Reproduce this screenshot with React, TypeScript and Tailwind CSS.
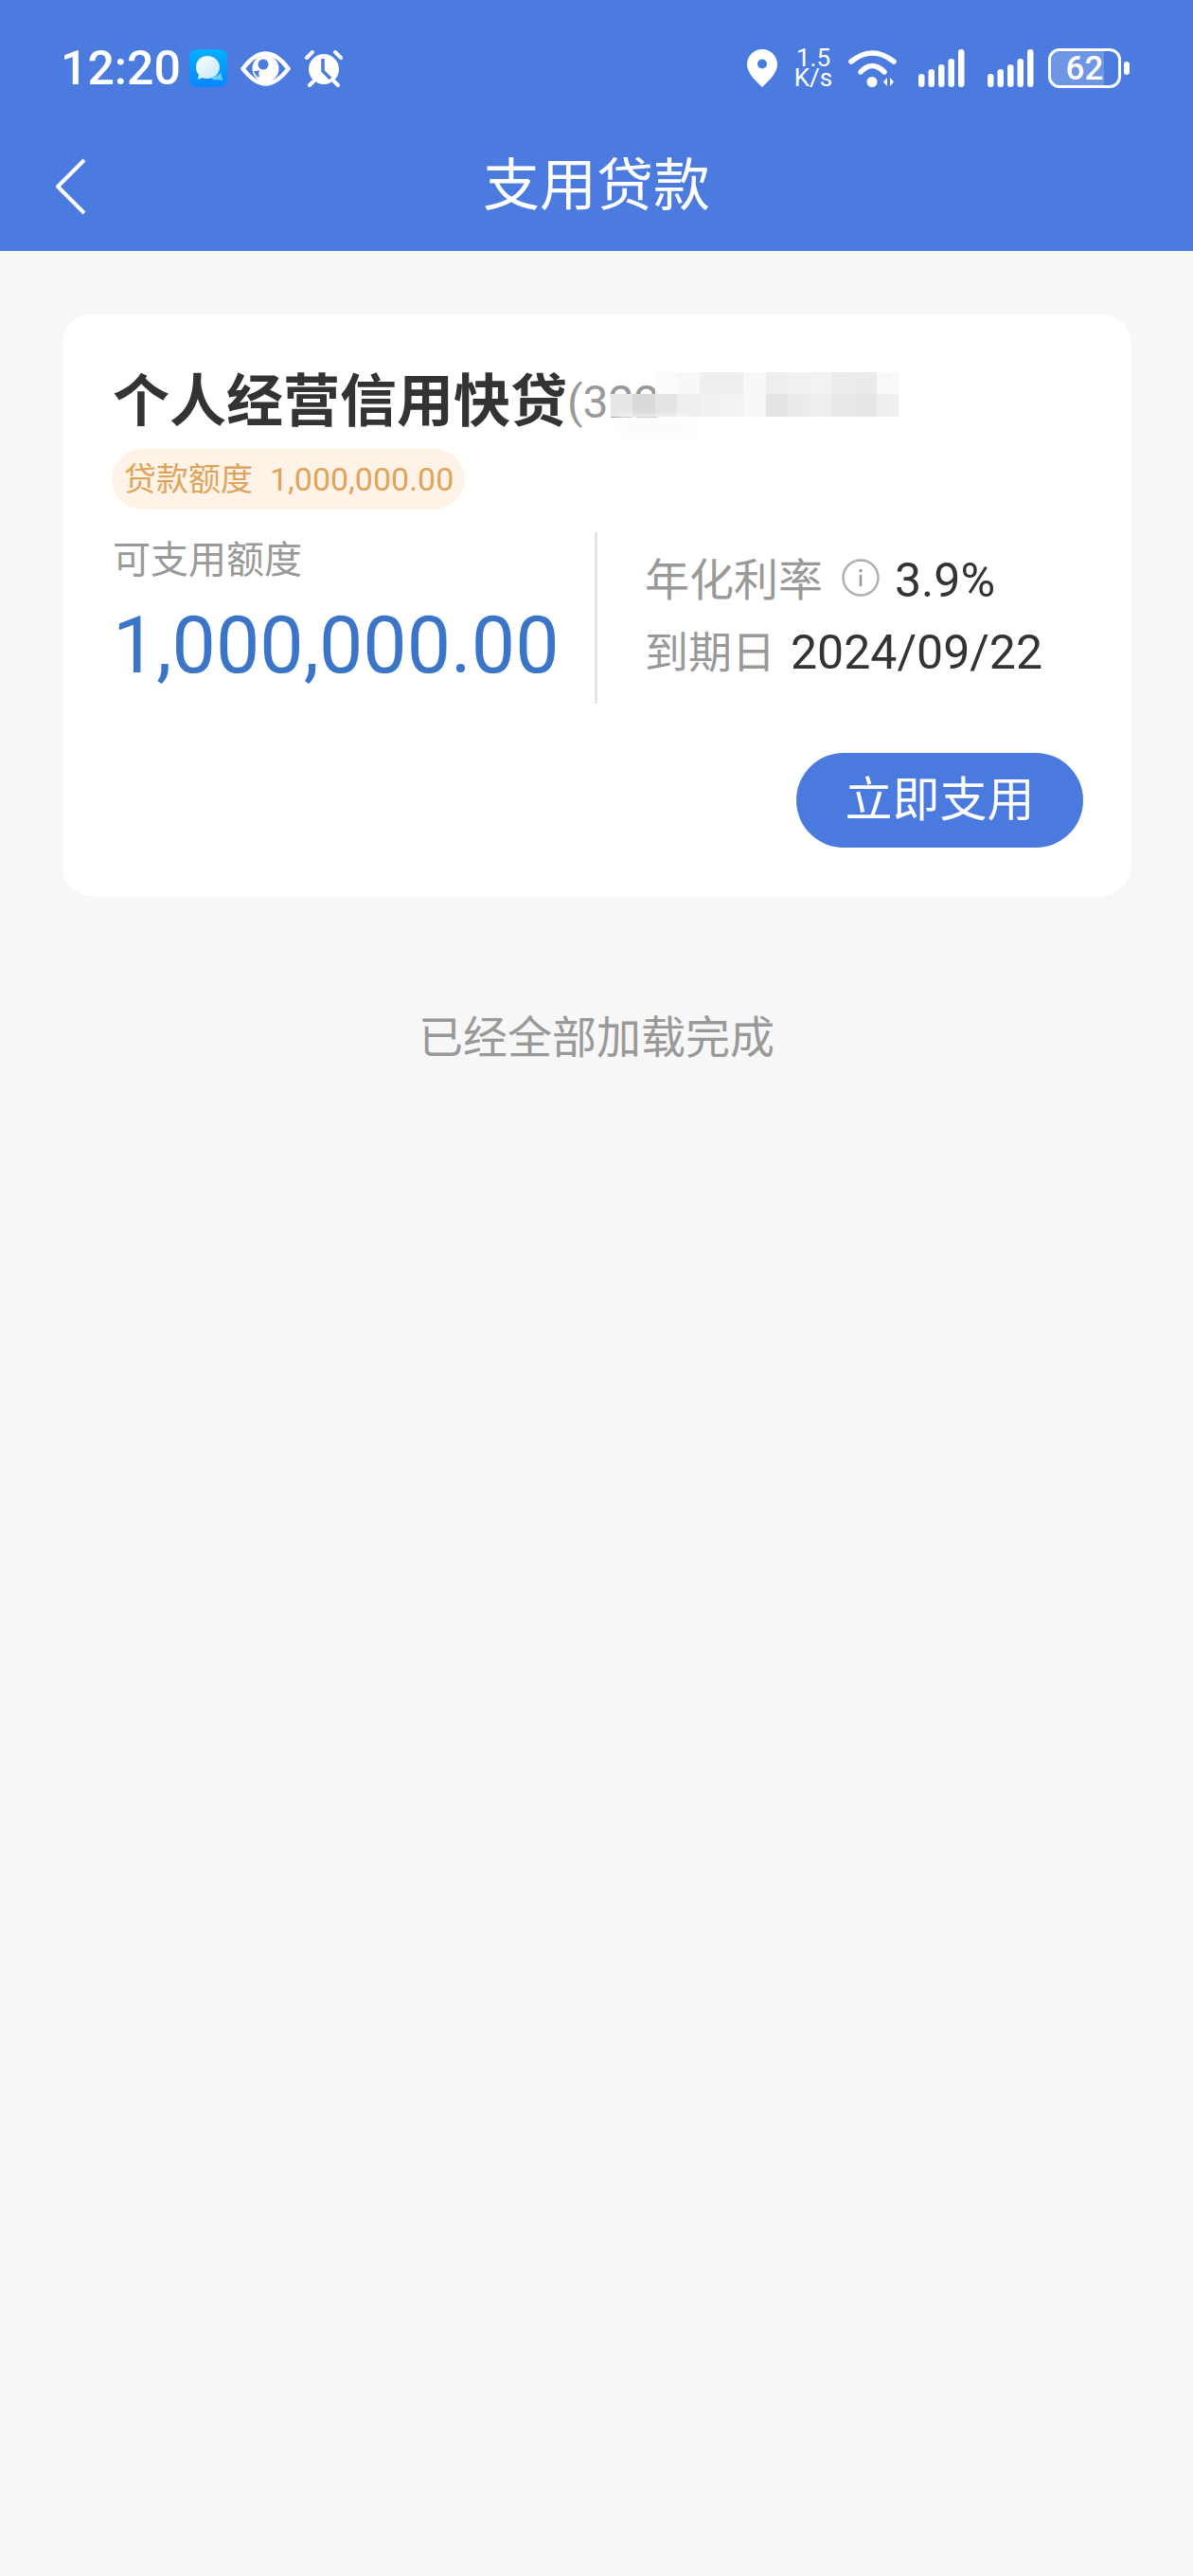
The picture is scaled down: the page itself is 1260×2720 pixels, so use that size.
import React from "react";

const mosaicTop = ["", "", "bg-[#fbfbfb]", "bg-[#f8f8f8]", "bg-[#efefef]", "bg-[#eeeeee]", "bg-[#f8f8f8]", "bg-[#eeeeee]", "bg-[#f0f0f0]", "bg-[#f2f2f2]", "bg-[#ececec]", "bg-[#ebebeb]", "bg-[#f9f9f9]"];
const mosaicBottom = ["bg-[#e6e6e6]", "bg-[#dadada]", "bg-[#e4e4e4]", "bg-[#eeeeee]", "bg-[#f1f1f1]", "bg-[#f2f2f2]", "bg-[#f7f7f7]", "bg-[#e3e3e3]", "bg-[#ebebeb]", "bg-[#eeeeee]", "bg-[#e8e8e8]", "bg-[#e7e7e7]", "bg-[#efefef]"];

function MessageIcon() {
  return (
    <svg width="40" height="40" viewBox="0 0 40 40">
      <defs>
        <linearGradient id="msgBg" x1="0" y1="0" x2="0" y2="1">
          <stop offset="0" stopColor="#00b2ff" />
          <stop offset="1" stopColor="#0a84ff" />
        </linearGradient>
        <linearGradient id="msgFront" x1="0" y1="0" x2="1" y2="1">
          <stop offset="0" stopColor="#ffffff" />
          <stop offset="1" stopColor="#bfe6fb" />
        </linearGradient>
      </defs>
      <rect width="40" height="40" rx="8" fill="url(#msgBg)" />
      <path d="M23 30c5-1 9-3 10-6l2 9-6-1c-2 1-5 0-6-2z" fill="#5fd0f5" />
      <path d="M19 7c7 0 13 5 13 12s-6 12-13 12c-2 0-3 0-5-1l-5 2 1-5c-2-2-3-5-3-8 0-7 5-12 12-12z" fill="url(#msgFront)" />
    </svg>
  );
}

function EyeIcon() {
  return (
    <svg width="53" height="37" viewBox="0 0 53 37">
      <path d="M2.5 18.5C12 6 20 2.5 26.5 2.5S41 6 50.5 18.5C41 31 33 34.5 26.5 34.5S12 31 2.5 18.5Z" fill="none" stroke="#fff" strokeWidth="4.5" />
      <circle cx="26.5" cy="18.5" r="14" fill="#fff" />
      <circle cx="24" cy="14" r="5.5" fill="#4c7bdf" />
      <path d="M14 21c1 3 3 6 6 7-1-3-1-6 0-8-2 1-4 1-6 1z" fill="#4c7bdf" />
    </svg>
  );
}

function AlarmIcon() {
  return (
    <svg width="42" height="40" viewBox="0 0 42 40">
      <circle cx="21" cy="21" r="16" fill="#fff" />
      <path d="M20 10v13l8 8" fill="none" stroke="#4c7bdf" strokeWidth="3.5" />
      <path d="M3 9l6-6M33 3l6 6" stroke="#fff" strokeWidth="4" strokeLinecap="round" />
      <path d="M6 38l4-4M32 34l4 4" stroke="#fff" strokeWidth="4" strokeLinecap="round" />
    </svg>
  );
}

function PinIcon() {
  return (
    <svg width="32" height="40" viewBox="0 0 32 40">
      <path fillRule="evenodd" fill="#fff" d="M16 0C7 0 0 7 0 16c0 10 11 19 16 24 5-5 16-14 16-24C32 7 25 0 16 0Zm0 10.5a5 5 0 1 1 0 10 5 5 0 0 1 0-10Z" />
    </svg>
  );
}

function WifiIcon() {
  return (
    <svg width="51" height="40" viewBox="0 0 51 40">
      <path d="M3 13Q25-5 48 13" fill="none" stroke="#fff" strokeWidth="5.5" strokeLinecap="round" />
      <path d="M13 24Q25 11 38 24" fill="none" stroke="#fff" strokeWidth="5.5" strokeLinecap="round" />
      <circle cx="25" cy="34.5" r="5.5" fill="#fff" />
      <path d="M41 30v9l-4-4.500zM44 30v9l4-4.500z" fill="#fff" />
    </svg>
  );
}

function SignalIcon() {
  return (
    <svg width="49" height="40" viewBox="0 0 49 40" fill="#fff">
      <rect x="0" y="26" width="6.500" height="14" rx="3.200" />
      <rect x="10.500" y="21" width="6.500" height="19" rx="3.200" />
      <rect x="21" y="16" width="6.500" height="24" rx="3.200" />
      <rect x="31.500" y="10" width="6.500" height="30" rx="3.200" />
      <rect x="42" y="0" width="6.500" height="40" rx="3.200" />
    </svg>
  );
}

function InfoIcon() {
  return (
    <svg width="40" height="40" viewBox="0 0 40 40">
      <circle cx="20" cy="20" r="18.500" fill="none" stroke="#b0b0b0" strokeWidth="2.500" />
      <circle cx="20" cy="12.500" r="1.800" fill="#999" />
      <rect x="18.700" y="17" width="2.600" height="12" fill="#999" />
    </svg>
  );
}

export default function App() {
  return (
    <div className="min-h-[2720px] bg-[#f7f7f7] font-['Roboto','Noto_Sans_CJK_SC',sans-serif]">
      <header className="h-[265px] bg-[#4c7bdf] text-white pt-[44px]">
        <div className="h-[56px] flex items-center justify-between pl-[64px] pr-[67px]">
          <div className="flex items-center">
            <span className="text-[50px] leading-[56px] w-[136px] font-medium">12:20</span>
            <MessageIcon />
            <span className="ml-[14px]"><EyeIcon /></span>
            <span className="ml-[14px]"><AlarmIcon /></span>
          </div>
          <div className="flex items-center">
            <PinIcon />
            <div className="ml-[18px] w-[40px] flex flex-col items-center text-[26px] leading-[21px]">
              <span>1.5</span>
              <span>K/s</span>
            </div>
            <span className="ml-[17px]"><WifiIcon /></span>
            <span className="ml-[23px]"><SignalIcon /></span>
            <span className="ml-[24px]"><SignalIcon /></span>
            <div className="ml-[15px] relative w-[77px] h-[42px] rounded-[12px] border-[3px] border-white overflow-hidden flex items-center justify-center">
              <div className="absolute inset-y-0 left-0 w-[56px] bg-white/20" />
              <span className="relative text-[35px] leading-none font-medium">62</span>
            </div>
            <div className="ml-[3px] w-[6px] h-[14px] rounded-full bg-white" />
          </div>
        </div>
        <div className="mt-[44px] h-[100px] grid grid-cols-[1fr_auto_1fr] items-center px-[59px]">
          <svg className="mt-[2px]" width="32" height="60" viewBox="0 0 32 60" fill="none">
            <path d="M30 2 2 30l28 28" stroke="#fff" strokeWidth="4" strokeLinejoin="round" />
          </svg>
          <h1 className="text-[60px] leading-[100px] pt-[3px] font-normal">支用贷款</h1>
          <div />
        </div>
      </header>

      <section className="mt-[67px] mx-[66px] bg-white rounded-[30px] pt-[63px] pl-[53px] pr-[50px] pb-[51px]">
        <div className="relative h-[60px] flex items-center">
          <span className="text-[60px] leading-[60px] font-bold text-[#333333]">个人经营信用快贷</span>
          <span className="text-[48px] leading-[60px] text-[#999999]">(322</span>
          <div className="absolute left-[526px] top-[-2px] w-[304px] grid grid-cols-[repeat(13,1fr)]">
            {mosaicTop.map((c, i) => (
              <div key={i} className={`h-[23px] ${c}`} />
            ))}
            {mosaicBottom.map((c, i) => (
              <div key={i} className={`h-[24px] ${c}`} />
            ))}
          </div>
          <div className="absolute left-[531px] top-[45px] w-[84px] h-[20px] rounded-full bg-[#fcfcfc] blur-[4px]" />
        </div>

        <div className="mt-[19px] -ml-[1px] w-[373px] h-[64px] rounded-full bg-[#fef3e6] text-[#dfa45c] flex items-center pl-[13px] text-[34px]">
          <span>贷款额度</span>
          <span className="ml-[18px]">1,000,000.00</span>
        </div>

        <div className="mt-[24px] flex h-[181px]">
          <div className="w-[509px]">
            <div className="h-[60px] text-[40px] leading-[60px] text-[#999999]">可支用额度</div>
            <div className="mt-[10px] h-[100px] text-[82.500px] leading-[100px] text-[#3a75c8]">1,000,000.00</div>
          </div>
          <div className="w-[3px] bg-[#e2e5ec]" />
          <div className="pl-[50px] pt-[13px]">
            <div className="h-[76px] flex items-center">
              <span className="text-[47px] text-[#999999]">年化利率</span>
              <span className="ml-[20px] mb-[6px]"><InfoIcon /></span>
              <span className="ml-[16px] text-[50px] text-[#333333]">3.9%</span>
            </div>
            <div className="h-[76px] flex items-center">
              <span className="text-[46px] text-[#999999]">到期日</span>
              <span className="ml-[16px] text-[50px] text-[#333333]">2024/09/22</span>
            </div>
          </div>
        </div>

        <div className="mt-[52px] flex justify-end">
          <button className="w-[303px] h-[100px] rounded-full bg-[#4b7ade] text-white text-[50px]">立即支用</button>
        </div>
      </section>

      <p className="mt-[120px] text-center text-[47px] leading-[60px] text-[#999999]">已经全部加载完成</p>
    </div>
  );
}
